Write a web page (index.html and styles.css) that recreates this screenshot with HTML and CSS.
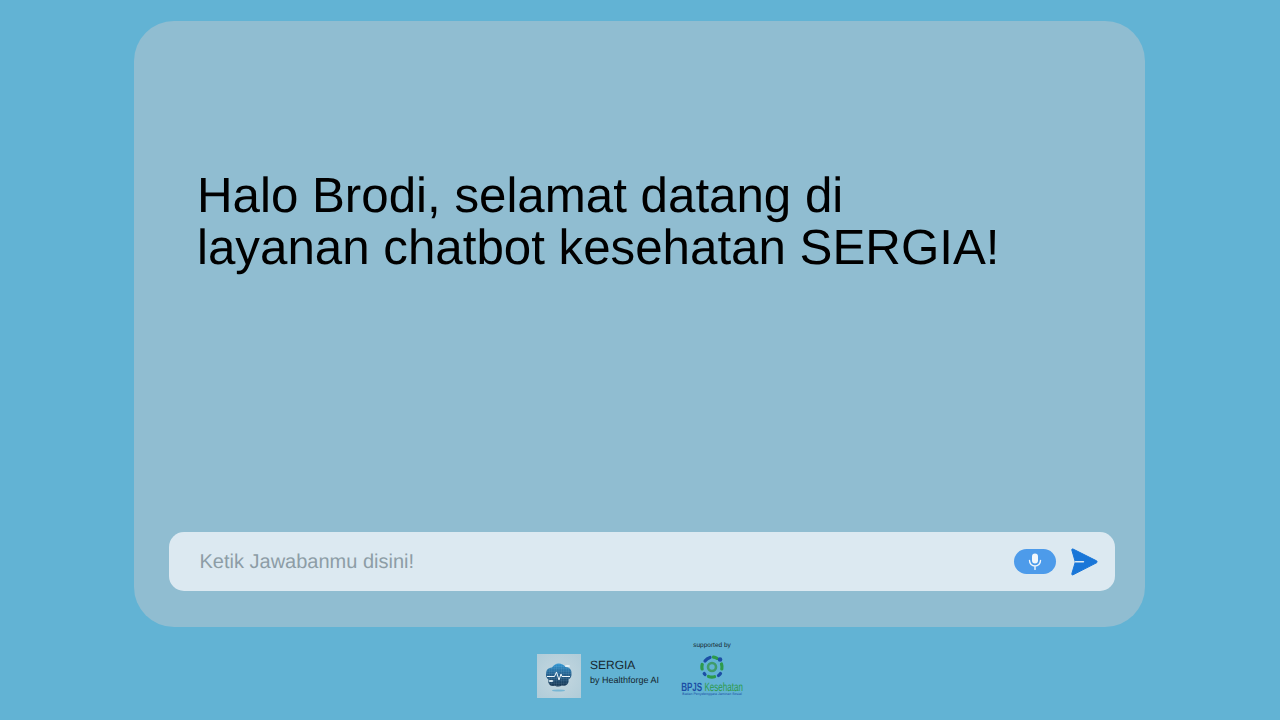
FILE: index.html
```html
<!DOCTYPE html>
<html lang="id">
<head>
<meta charset="utf-8">
<title>SERGIA</title>
<link rel="stylesheet" href="styles.css">
</head>
<body>
<main class="page">
  <section class="card">
    <div class="greeting-wrap">
      <h1 class="greeting">Halo Brodi, selamat datang di<br>layanan chatbot kesehatan SERGIA!</h1>
    </div>
    <div class="composer">
      <span class="placeholder">Ketik Jawabanmu disini!</span>
      <button class="mic" type="button" aria-label="Mic">
        <svg width="14" height="17" viewBox="0 0 14 17">
          <rect x="4" y="0.500" width="6" height="10" rx="3" fill="#f2f7fb"/>
          <path d="M1.500 7.500a5.500 5.500 0 0 0 11 0M7 13v3.500" fill="none" stroke="#f2f7fb" stroke-width="1.400" stroke-linecap="round"/>
        </svg>
      </button>
      <button class="send" type="button" aria-label="Send">
        <svg width="28" height="28" viewBox="0 0 28 28">
          <path d="M1.800 2c-.2-.8.500-1.300 1.200-1L26.500 12.800c.9.500.9 1.600 0 2L3 26.800c-.8.400-1.500-.3-1.200-1.100L5.300 14z" fill="#1976d8" stroke="#1976d8" stroke-width="1" stroke-linejoin="round"/>
          <path d="M5.500 13.700h8" stroke="#dce9f1" stroke-width="1.400" stroke-linecap="round"/>
        </svg>
      </button>
    </div>
  </section>
  <footer class="footer">
    <div class="brand">
      <div class="logo-tile">
        <svg width="44" height="44" viewBox="0 0 44 44">
          <defs>
            <radialGradient id="tile" cx=".5" cy=".5" r=".75">
              <stop offset="0" stop-color="#c6d8e0"/>
              <stop offset="1" stop-color="#aecbd8"/>
            </radialGradient>
            <linearGradient id="cloud" x1="0" y1="0" x2="0" y2="1">
              <stop offset="0" stop-color="#2f97d4"/>
              <stop offset=".45" stop-color="#22608f"/>
              <stop offset="1" stop-color="#16344f"/>
            </linearGradient>
            <pattern id="grid" width="2.400" height="2.400" patternUnits="userSpaceOnUse">
              <path d="M0 0h2.400M0 0v2.400" stroke="#bfe0ef" stroke-opacity=".3" stroke-width=".6" fill="none"/>
            </pattern>
          </defs>
          <rect width="44" height="44" fill="url(#tile)"/>
          <path d="M13.500 31.500a5.500 5.500 0 0 1-2-6A6 6 0 0 1 9 20a5.800 5.800 0 0 1 6-6.500A8 8 0 0 1 28.500 13a5.800 5.800 0 0 1 6 7 6 6 0 0 1-3 5.500 5.500 5.500 0 0 1-3 6 5.500 5.500 0 0 1-3.500 0 7 7 0 0 1-7 .2 5.500 5.500 0 0 1-4.500-.2z" fill="url(#cloud)"/>
          <path d="M13.500 31.500a5.500 5.500 0 0 1-2-6A6 6 0 0 1 9 20a5.800 5.800 0 0 1 6-6.500A8 8 0 0 1 28.500 13a5.800 5.800 0 0 1 6 7 6 6 0 0 1-3 5.500 5.500 5.500 0 0 1-3 6 5.500 5.500 0 0 1-3.500 0 7 7 0 0 1-7 .2 5.500 5.500 0 0 1-4.500-.2z" fill="url(#grid)"/>
          <path d="M10 22.500h7.500l2-4.500 2.500 8 2-6 1 2.500h8" fill="none" stroke="#eef7fb" stroke-width="1"/>
          <ellipse cx="14" cy="27" rx="2.500" ry="1" fill="#dfeef5"/>
          <ellipse cx="30.500" cy="12" rx="2.600" ry="1" fill="#eaf3f7"/>
          <ellipse cx="21.500" cy="36.500" rx="6.500" ry="1" fill="#78b6d4"/>
        </svg>
      </div>
      <div class="brand-text">
        <span class="brand-name">SERGIA</span>
        <span class="brand-sub">by Healthforge AI</span>
      </div>
    </div>
    <div class="support">
      <span class="support-label">supported by</span>
      <svg class="bpjs-mark" width="24" height="24" viewBox="0 0 24 24">
        <g fill="none" stroke-linecap="round" stroke-width="3.200">
          <path d="M5 6A10 10 0 0 1 10 2.500" stroke="#1c4fa5"/>
          <path d="M13.500 2.200a10 10 0 0 1 3.500 1.200" stroke="#2d9a4b"/>
          <path d="M21.500 9a10 10 0 0 1 .3 5" stroke="#2d9a4b"/>
          <path d="M20.500 18.500a10 10 0 0 1-2 2" stroke="#1c4fa5"/>
          <path d="M14.500 21.700a10 10 0 0 1-6 -.3" stroke="#2d9a4b"/>
          <path d="M5 19.500a10 10 0 0 1-.8-1" stroke="#1c4fa5"/>
          <path d="M2.100 14a10 10 0 0 1 .1-4.500" stroke="#2d9a4b"/>
        </g>
        <circle cx="20" cy="4.500" r="2.300" fill="#1c4fa5"/>
        <circle cx="12" cy="12" r="4" fill="none" stroke="#3f9c6b" stroke-width="2.600"/>
      </svg>
      <span class="bpjs-word"><span class="bpjs-blue">BPJS</span> <span class="bpjs-green">Kesehatan</span></span>
      <span class="bpjs-tag">Badan Penyelenggara Jaminan Sosial</span>
    </div>
  </footer>
</main>
</body>
</html>
```
FILE: styles.css
```css
* { box-sizing: border-box; }
html, body { margin: 0; height: 100%; }
body {
  background: #62b3d4;
  font-family: "Liberation Sans", Arial, sans-serif;
  overflow: hidden;
  text-rendering: geometricPrecision;
}
.page {
  width: 1280px;
  height: 720px;
  padding-top: 21px;
  display: flex;
  flex-direction: column;
  align-items: center;
}
.card {
  width: 1011px;
  height: 606px;
  margin-left: -1px;
  border-radius: 40px;
  background: #90bdd1;
  padding: 0 30px 36px 35px;
  display: flex;
  flex-direction: column;
  justify-content: space-between;
}
.greeting-wrap { padding: 149px 0 0 28px; }
.greeting {
  margin: 0;
  font-weight: 400;
  font-size: 49.280px;
  line-height: 52px;
  color: #000;
}
.composer {
  height: 59px;
  border-radius: 15px;
  background: #dce9f1;
  padding: 0 17px 0 30.500px;
  display: flex;
  align-items: center;
}
.placeholder {
  flex: 1;
  font-size: 20px;
  color: #8d9da6;
  padding-top: 2px;
}
.mic {
  width: 42px;
  height: 25px;
  border: 0;
  padding: 0;
  border-radius: 13px;
  background: #4d9bea;
  display: flex;
  align-items: center;
  justify-content: center;
  margin-right: 14px;
}
.send {
  border: 0;
  padding: 0;
  background: none;
  display: flex;
}
.footer {
  height: 93px;
  width: 205px;
  display: flex;
  align-items: flex-start;
  justify-content: space-between;
  margin-left: -1px;
  flex: none;
}
.brand {
  display: flex;
  align-items: center;
  gap: 9px;
  padding-top: 27px;
}
.logo-tile {
  width: 44px;
  height: 44px;
  flex: none;
  display: flex;
}
.brand-text {
  display: flex;
  flex-direction: column;
  gap: 1.500px;
  color: #15262e;
  margin-top: -8.500px;
  white-space: nowrap;
}
.brand-name { font-size: 12px; line-height: 15px; }
.brand-sub { font-size: 9px; line-height: 12px; }
.support {
  width: 60px;
  display: flex;
  flex-direction: column;
  align-items: center;
  padding-top: 15px;
}
.support-label { font-size: 6.500px; line-height: 8px; color: #15262e; white-space: nowrap; }
.bpjs-mark { margin-top: 5px; flex: none; }
.bpjs-word { font-size: 12px; line-height: 10px; white-space: nowrap; margin-top: 3px; transform: scaleX(.67); }
.bpjs-blue { color: #1c4fa5; font-weight: 700; }
.bpjs-green { color: #2d9a4b; }
.bpjs-tag { font-size: 3.500px; line-height: 4px; color: #1c4fa5; white-space: nowrap; }
```
